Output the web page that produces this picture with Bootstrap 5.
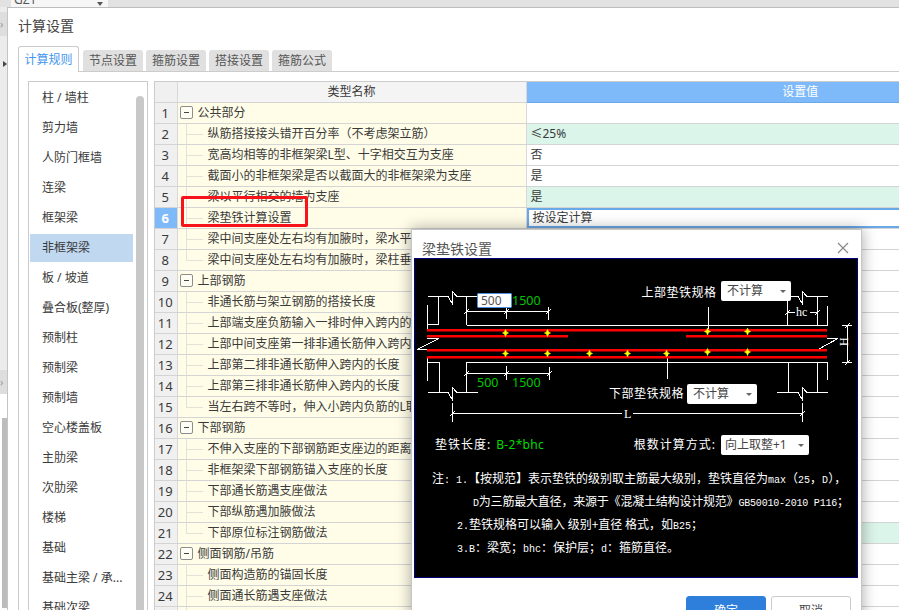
<!DOCTYPE html>
<html lang="zh">
<head>
  <meta charset="UTF-8" />
  <meta name="viewport" content="width=device-width, initial-scale=1.0" />
  <title>计算设置</title>
  <link rel="stylesheet" href="https://cdn.jsdelivr.net/npm/bootstrap@5.3.3/dist/css/bootstrap.min.css" />
  <style>
    html, body { height: 610px; overflow: hidden; }
    body { font: 12px/1.2 "Noto Sans", "Noto Sans CJK SC", sans-serif; color: #3a3a3a; background: #e4e4e4; position: relative; }

    /* window behind the dialog */
    .top-strip { height: 7px; overflow: hidden; padding-left: 11px; background: #e2e2e2; }
    .top-combo { width: 97px; height: 7px; padding: 0 5px 0 3px; background: #f6f6f6; color: #555; line-height: 12px; margin-top: 0; }
    .top-combo span { margin-top: -6px; font-size: 12px; }
    .combo-tri { width: 0; height: 0; border: 3px solid transparent; border-top: 4px solid #555; border-bottom: 0; margin-top: 2px; }
    .left-strip { width: 7px; height: 603px; flex: none; background: #ececec; }
    .strip-chev { height: 24px; color: #999; font-size: 11px; line-height: 24px; background: #dedede; margin-top: 5px; }
    .strip-tri { width: 0; height: 0; border: 3px solid transparent; border-left: 4px solid #444; border-right: 0; margin: 25px 0 0 3px; }
    .strip-gap { height: 298px; }
    .strip-thumb { width: 5px; margin: 24px 0 0 2px; height: 190px; background: #bcbcbc; }
    .strip-low { background: #fff; flex: 1; }

    /* main settings dialog */
    .calc-dlg { flex: 1; min-width: 0; height: 603px; overflow: hidden; background: #fff; border-top: 1px solid #bdbdbd; border-left: 1px solid #c4c4c4; padding-left: 10px; }
    .calc-title { height: 38px; padding-top: 9px; font-size: 14px; line-height: 17px; color: #444; }
    .calc-tabs { border-bottom: 1px solid #ccc; gap: 3px; height: 26px; align-items: flex-end; }
    .calc-tabs .nav-link { width: 60px; height: 21px; padding: 0; margin: 0; text-align: center; font-size: 12px; line-height: 21px; color: #555; background: #e0e0e0; border: 0; border-radius: 3px 3px 0 0; }
    .calc-tabs .nav-link.active { width: 61px; height: 26px; line-height: 26px; margin: 0 1px -1px 0; color: #3f96f0; background: #fff; border: 1px solid #ccc; border-bottom: 0; }
    .calc-pane { border-left: 1px solid #ccc; padding: 9px 0 0 9px; height: 540px; gap: 6px; }

    .rule-side { width: 120px; flex: none; border: 1px solid #ccc; padding-left: 1px; height: 560px; overflow: hidden; }
    .rule-list { width: 103px; flex: none; padding-top: 1px; }
    .rule-list .list-group-item, .rule-list .list-group-item + .list-group-item.active { height: 28px; margin: 1px 0 1px; padding: 0 0 0 12px; border: 0; background: transparent; color: #3a3a3a; font-size: 12px; line-height: 28px; white-space: nowrap; border-radius: 0; }
    .rule-list .list-group-item + .list-group-item.active { background: #c0d8f0; }
    .rule-thumb { width: 8px; margin: 14px 0 0 3px; background: #c8c8c8; border-radius: 4px 4px 0 0; }

    .grid-wrap { width: 760px; flex: none; overflow: hidden; height: 540px; border-top: 1px solid #ccc; border-left: 1px solid #ccc; }
    .calc-grid { width: 920px; table-layout: fixed; border-collapse: collapse; margin: 0; }
    .calc-grid th, .calc-grid td { height: 21px; padding: 0; font-size: 12px; font-weight: 400; line-height: 20px; color: #3a3a3a; background: #fff; border: 0; border-bottom: 1px solid #d4d4d4; border-right: 1px solid #d8d8d8; box-shadow: none; white-space: nowrap; overflow: hidden; vertical-align: middle; }
    .calc-grid .col-num { width: 22px; }
    .calc-grid .col-name { width: 349px; }
    .calc-grid th { height: 20px; text-align: center; background: #f4f4f4; }
    .calc-grid th.head-val { background: #7eb9f9; color: #fff; border-bottom-color: #6aa9e8; }
    .calc-grid th.head-blank, .calc-grid td.row-num { background: #f0f0f0; }
    .calc-grid td.row-num { text-align: center; font-size: 13px; padding-right: 1px; }
    .calc-grid td.row-num.on { background: #7eb9f9; color: #fff; font-weight: 700; }
    .calc-grid td.name-cell { background: #fffde8; position: relative; }
    .calc-grid td.val-cell { padding-left: 4px; font-size: 12px; }
    .calc-grid td.val-green { background: #dcf5ea; }
    .calc-grid td.val-edit { padding-left: 6px; box-shadow: inset 0 0 0 2px #6aa9e8; }
    .tree-kid { padding-left: 30px !important; }
    .tree-kid::before { content: ""; position: absolute; left: 8px; top: 0; bottom: 0; width: 1px; background: #e2e2d8; }
    .tree-kid::after { content: ""; position: absolute; left: 8px; top: 50%; width: 17px; height: 1px; background: #e2e2d8; }
    .tree-end::before { bottom: 50%; }
    .tree-box { display: inline-block; width: 13px; height: 13px; margin: 0 5px 0 2px; border: 1px solid #8d8d8d; border-radius: 2px; background: #fffef4; vertical-align: -2px; position: relative; }
    .tree-box::after { content: ""; position: absolute; left: 3px; right: 3px; top: 5px; height: 1px; background: #444; }
    .mark-box { position: absolute; left: 181px; top: 196px; width: 127px; height: 31px; border: 3px solid #f6141a; border-radius: 2px; }

    /* beam pad dialog */
    .pad-dlg { position: absolute; left: 411px; top: 229px; width: 451px; height: 400px; padding: 0 2px; background: #fff; border: 1px solid #c6c6c6; box-shadow: 0 0 14px rgba(0, 0, 0, .35); }
    .pad-head { height: 28px; padding: 0 10px 0 8px; }
    .pad-title { font-size: 14px; line-height: 17px; color: #555; margin-top: 10px; }
    .pad-x { display: block; margin-top: 5px; }
    .cad-box { position: relative; width: 444px; height: 320px; background: #000; border: 1px solid #000080; color: #fff; overflow: hidden; }
    .cad-box svg { display: block; }
    .cad-lbl { font: 12px "Noto Sans CJK SC", sans-serif; letter-spacing: .5px; fill: #fff; }
    .cad-num { font: 12.5px "Noto Sans", sans-serif; fill: #00c800; }
    .cad-ser { font: 12px "Liberation Serif", serif; fill: #fff; }
    .cad-pick { position: absolute; height: 20px; width: 70px; padding: 0 5px 0 6px; font-size: 12px; line-height: 20px; color: #444; background: #fff; border-radius: 2px; }
    .cad-tri { width: 0; height: 0; border: 3px solid transparent; border-top: 3px solid #666; border-bottom: 0; }
    .cad-input.form-control { position: absolute; left: 62px; top: 34px; width: 35px; height: 15px; min-height: 0; padding: 0 0 0 3px; font-size: 12px; line-height: 13px; color: #555; border: 1px solid #4a90e2; border-radius: 1px; }
    .cad-fields { height: 20px; margin-top: 10px; padding: 0 48px 0 20px; font-size: 12px; }
    .cad-fields .cad-pick { position: static; width: 88px; margin-left: 5px; padding-left: 4px; letter-spacing: 0; }
    .cad-spaced { letter-spacing: 1px; }
    .cad-green { color: #00dc00; margin-left: 5px; letter-spacing: .3px; font-family: "Noto Sans", sans-serif; }
    .cad-notes { margin-top: 11px; font-size: 12px; line-height: 23px; white-space: nowrap; font-family: "Noto Sans CJK SC", sans-serif; }
    .cad-notes b { font: 10px "Liberation Mono", monospace; }
    .note-a { padding-left: 17px; }
    .note-b { padding-left: 58px; letter-spacing: -.2px; }
    .note-c { padding-left: 42px; }
    .pad-foot { padding: 18px 8px 0 0; gap: 5px; }
    .pad-foot .btn { width: 80px; height: 30px; padding: 0; font-size: 12px; border-radius: 3px; }
    .pad-foot .btn-primary { background: #2e7fdb; border-color: #2e7fdb; }
    .pad-foot .btn-light { background: #fff; border-color: #ccc; color: #444; }
  </style>
</head>

<body>
  <div class="top-strip">
    <div class="top-combo d-flex justify-content-between">
      <span>GZ1</span>
      <i class="combo-tri"></i>
    </div>
  </div>

  <div class="d-flex">
    <div class="left-strip d-flex flex-column">
      <div class="strip-chev">›</div>
      <div class="strip-tri"></div>
      <div class="strip-gap"></div>
      <div class="strip-chev">›</div>
      <div class="strip-low"><div class="strip-thumb"></div></div>
    </div>

    <div class="calc-dlg">
      <div class="calc-title">计算设置</div>
      <ul class="nav nav-tabs calc-tabs">
        <li class="nav-item"><a class="nav-link active" href="#">计算规则</a></li>
        <li class="nav-item"><a class="nav-link" href="#">节点设置</a></li>
        <li class="nav-item"><a class="nav-link" href="#">箍筋设置</a></li>
        <li class="nav-item"><a class="nav-link" href="#">搭接设置</a></li>
        <li class="nav-item"><a class="nav-link" href="#">箍筋公式</a></li>
      </ul>

      <div class="calc-pane d-flex">
        <div class="rule-side d-flex">
          <div class="list-group rule-list">
            <a class="list-group-item" href="#">柱 / 墙柱</a>
            <a class="list-group-item" href="#">剪力墙</a>
            <a class="list-group-item" href="#">人防门框墙</a>
            <a class="list-group-item" href="#">连梁</a>
            <a class="list-group-item" href="#">框架梁</a>
            <a class="list-group-item active" href="#">非框架梁</a>
            <a class="list-group-item" href="#">板 / 坡道</a>
            <a class="list-group-item" href="#">叠合板(整厚)</a>
            <a class="list-group-item" href="#">预制柱</a>
            <a class="list-group-item" href="#">预制梁</a>
            <a class="list-group-item" href="#">预制墙</a>
            <a class="list-group-item" href="#">空心楼盖板</a>
            <a class="list-group-item" href="#">主肋梁</a>
            <a class="list-group-item" href="#">次肋梁</a>
            <a class="list-group-item" href="#">楼梯</a>
            <a class="list-group-item" href="#">基础</a>
            <a class="list-group-item" href="#">基础主梁 / 承...</a>
            <a class="list-group-item" href="#">基础次梁</a>
          </div>
          <div class="rule-thumb"></div>
        </div>

        <div class="grid-wrap">
          <table class="table calc-grid">
            <colgroup><col class="col-num" /><col class="col-name" /><col /></colgroup>
            <thead>
              <tr><th class="head-blank"></th><th>类型名称</th><th class="head-val">设置值</th></tr>
            </thead>
            <tbody id="gridBody"></tbody>
          </table>
        </div>
      </div>
    </div>
  </div>

  <div class="mark-box"></div>

  <div class="pad-dlg">
    <div class="pad-head d-flex justify-content-between">
      <div class="pad-title">梁垫铁设置</div>
      <svg class="pad-x" width="12" height="20" viewBox="0 0 12 20"><path d="M1 8L11 18M11 8L1 18" stroke="#888" stroke-width="1.2" fill="none" /></svg>
    </div>

    <div class="cad-box">
      <svg width="442" height="166" viewBox="415 259 442 166">
        <defs><path id="padDot" d="M-3 0L-1 -1L0 -3.5L1 -1L3 0L1 1L0 3.5L-1 1Z" fill="#ff0" stroke="#ff0" stroke-width=".6" /></defs>
        <g fill="none" stroke="#fff" stroke-width="1" shape-rendering="crispEdges">
          <path d="M428 296.5H448L452 303V291L457 296.5H478M466.5 296V325M438.5 296V324.5H427.5M427.5 305V330" />
          <path d="M466.5 325.5H827.5M466.5 362.5H827.5" />
          <path d="M427 338.5H439L417 349.5H427" />
          <path d="M427.5 356V381M427.5 362.5H439.5V392.5M427.5 392.5H448L452 399V387L457 392.5H478M466.5 362V392.5" />
          <path d="M466.5 311.5H548.5M466.5 308V319M506.5 307V319M548.5 307V320M464 314L469 309M504 314L509 309M546 314L551 309" />
          <path d="M466.5 373.5H549.5M466.5 367V379M506.5 366V380M549.5 367V380M464 376L469 371M504 376L509 371M547 376L552 371" />
          <path d="M452.5 413.5H622M633 413.5H802.5M452.5 403V422M802.5 403V422M450 416L455 411M800 416L805 411" />
          <path d="M790 296.5H798L802 303V291L807 296.5H828M817.5 296V325M827.5 306V325M787.5 300V325" />
          <path d="M787.5 312.5H795M810 312.5H817.5M785 315L790 310M815 315L820 310" />
          <path d="M827.5 362V380M788.5 362V392.5M817.5 362V392.5M777 392.5H798L802 399V387L807 392.5H828" />
          <path d="M827 338.5H838L818 349.5H827" />
          <path d="M847.5 325V363M842 325.5H852M842 362.5H852M845 328L850 323M845 365L850 360" />
          <path d="M708.5 307V330M667.5 353V379" />
        </g>
        <g fill="#f00">
          <rect x="427" y="329" width="400" height="2.5" />
          <rect x="427" y="335" width="141" height="2.5" />
          <rect x="686" y="335" width="141" height="2.5" />
          <rect x="427" y="349" width="400" height="2.5" />
          <rect x="427" y="356" width="400" height="2.5" />
        </g>
        <use href="#padDot" x="505.5" y="333" /><use href="#padDot" x="547.5" y="333" />
        <use href="#padDot" x="707.5" y="331.5" /><use href="#padDot" x="747.5" y="331.5" />
        <use href="#padDot" x="505.5" y="353.5" /><use href="#padDot" x="547.5" y="353.5" />
        <use href="#padDot" x="589.5" y="353.5" /><use href="#padDot" x="627.5" y="353.5" />
        <use href="#padDot" x="666.5" y="353.5" /><use href="#padDot" x="707.5" y="352" />
        <use href="#padDot" x="747.5" y="352" />
        <text class="cad-num" x="512" y="304.5">1500</text>
        <text class="cad-num" x="477" y="387">500</text>
        <text class="cad-num" x="512" y="387">1500</text>
        <text class="cad-lbl" x="641.5" y="297">上部垫铁规格</text>
        <text class="cad-lbl" x="609" y="398">下部垫铁规格</text>
        <text class="cad-ser" x="624" y="417.5">L</text>
        <text class="cad-ser" x="796" y="316">hc</text>
        <text class="cad-ser" transform="rotate(-90 848 346)" x="848" y="346">H</text>
      </svg>

      <input class="form-control cad-input" type="text" value="500" />
      <div class="cad-pick d-flex justify-content-between align-items-center" style="left: 306px; top: 22px;">不计算<i class="cad-tri"></i></div>
      <div class="cad-pick d-flex justify-content-between align-items-center" style="left: 272px; top: 125px;">不计算<i class="cad-tri"></i></div>

      <div class="cad-fields d-flex justify-content-between align-items-center">
        <div class="cad-spaced">垫铁长度:<span class="cad-green">B-2*bhc</span></div>
        <div class="d-flex align-items-center cad-spaced">根数计算方式:
          <div class="cad-pick d-flex justify-content-between align-items-center">向上取整+1<i class="cad-tri"></i></div>
        </div>
      </div>

      <div class="cad-notes">
        <div class="note-a">注<b>: 1.</b>【按规范】表示垫铁的级别取主筋最大级别，垫铁直径为<b>max</b>（<b>25</b>，<b>D</b>），</div>
        <div class="note-b"><b>D</b>为三筋最大直径，来源于《混凝土结构设计规范》<b>GB50010-2010 P116</b>；</div>
        <div class="note-c"><b>2.</b>垫铁规格可以输入 级别+直径 格式，如<b>B25</b>；</div>
        <div class="note-c"><b>3.B</b>：梁宽；<b>bhc</b>：保护层；<b>d</b>：箍筋直径。</div>
      </div>
    </div>

    <div class="pad-foot d-flex justify-content-end">
      <button type="button" class="btn btn-primary">确定</button>
      <button type="button" class="btn btn-light">取消</button>
    </div>
  </div>

  <script>
    // g = group row, k = child row, e = last child of a group
    const gridRows = [
      ["g", "公共部分", ""],
      ["k", "纵筋搭接接头错开百分率（不考虑架立筋）", "≤25%", 1],
      ["k", "宽高均相等的非框架梁L型、十字相交互为支座", "否"],
      ["k", "截面小的非框架梁是否以截面大的非框架梁为支座", "是"],
      ["k", "梁以平行相交的墙为支座", "是", 1],
      ["k", "梁垫铁计算设置", "按设定计算"],
      ["k", "梁中间支座处左右均有加腋时，梁水平加腋钢筋做法", ""],
      ["e", "梁中间支座处左右均有加腋时，梁柱垂直加腋钢筋做法", ""],
      ["g", "上部钢筋", ""],
      ["k", "非通长筋与架立钢筋的搭接长度", ""],
      ["k", "上部端支座负筋输入一排时伸入跨内的长度", ""],
      ["k", "上部中间支座第一排非通长筋伸入跨内的长度", ""],
      ["k", "上部第二排非通长筋伸入跨内的长度", ""],
      ["k", "上部第三排非通长筋伸入跨内的长度", ""],
      ["e", "当左右跨不等时，伸入小跨内负筋的L取值", ""],
      ["g", "下部钢筋", ""],
      ["k", "不伸入支座的下部钢筋距支座边的距离", ""],
      ["k", "非框架梁下部钢筋锚入支座的长度", ""],
      ["k", "下部通长筋遇支座做法", ""],
      ["k", "下部纵筋遇加腋做法", ""],
      ["e", "下部原位标注钢筋做法", "", 1],
      ["g", "侧面钢筋/吊筋", ""],
      ["k", "侧面构造筋的锚固长度", ""],
      ["k", "侧面通长筋遇支座做法", ""],
      ["k", "侧面钢筋搭接长度", ""]
    ];

    document.getElementById("gridBody").innerHTML = gridRows.map((r, i) => {
      const picked = i === 5;
      const nameCell = r[0] === "g"
        ? `<td class="name-cell"><i class="tree-box"></i>${r[1]}</td>`
        : `<td class="name-cell tree-kid ${r[0] === "e" ? "tree-end" : ""}">${r[1]}</td>`;
      const valClass = "val-cell" + (r[3] ? " val-green" : "") + (picked ? " val-edit" : "");
      return `<tr><td class="row-num ${picked ? "on" : ""}">${i + 1}</td>${nameCell}<td class="${valClass}">${r[2]}</td></tr>`;
    }).join("");
  </script>
  <script src="https://cdn.jsdelivr.net/npm/bootstrap@5.3.3/dist/js/bootstrap.bundle.min.js"></script>
</body>

</html>
